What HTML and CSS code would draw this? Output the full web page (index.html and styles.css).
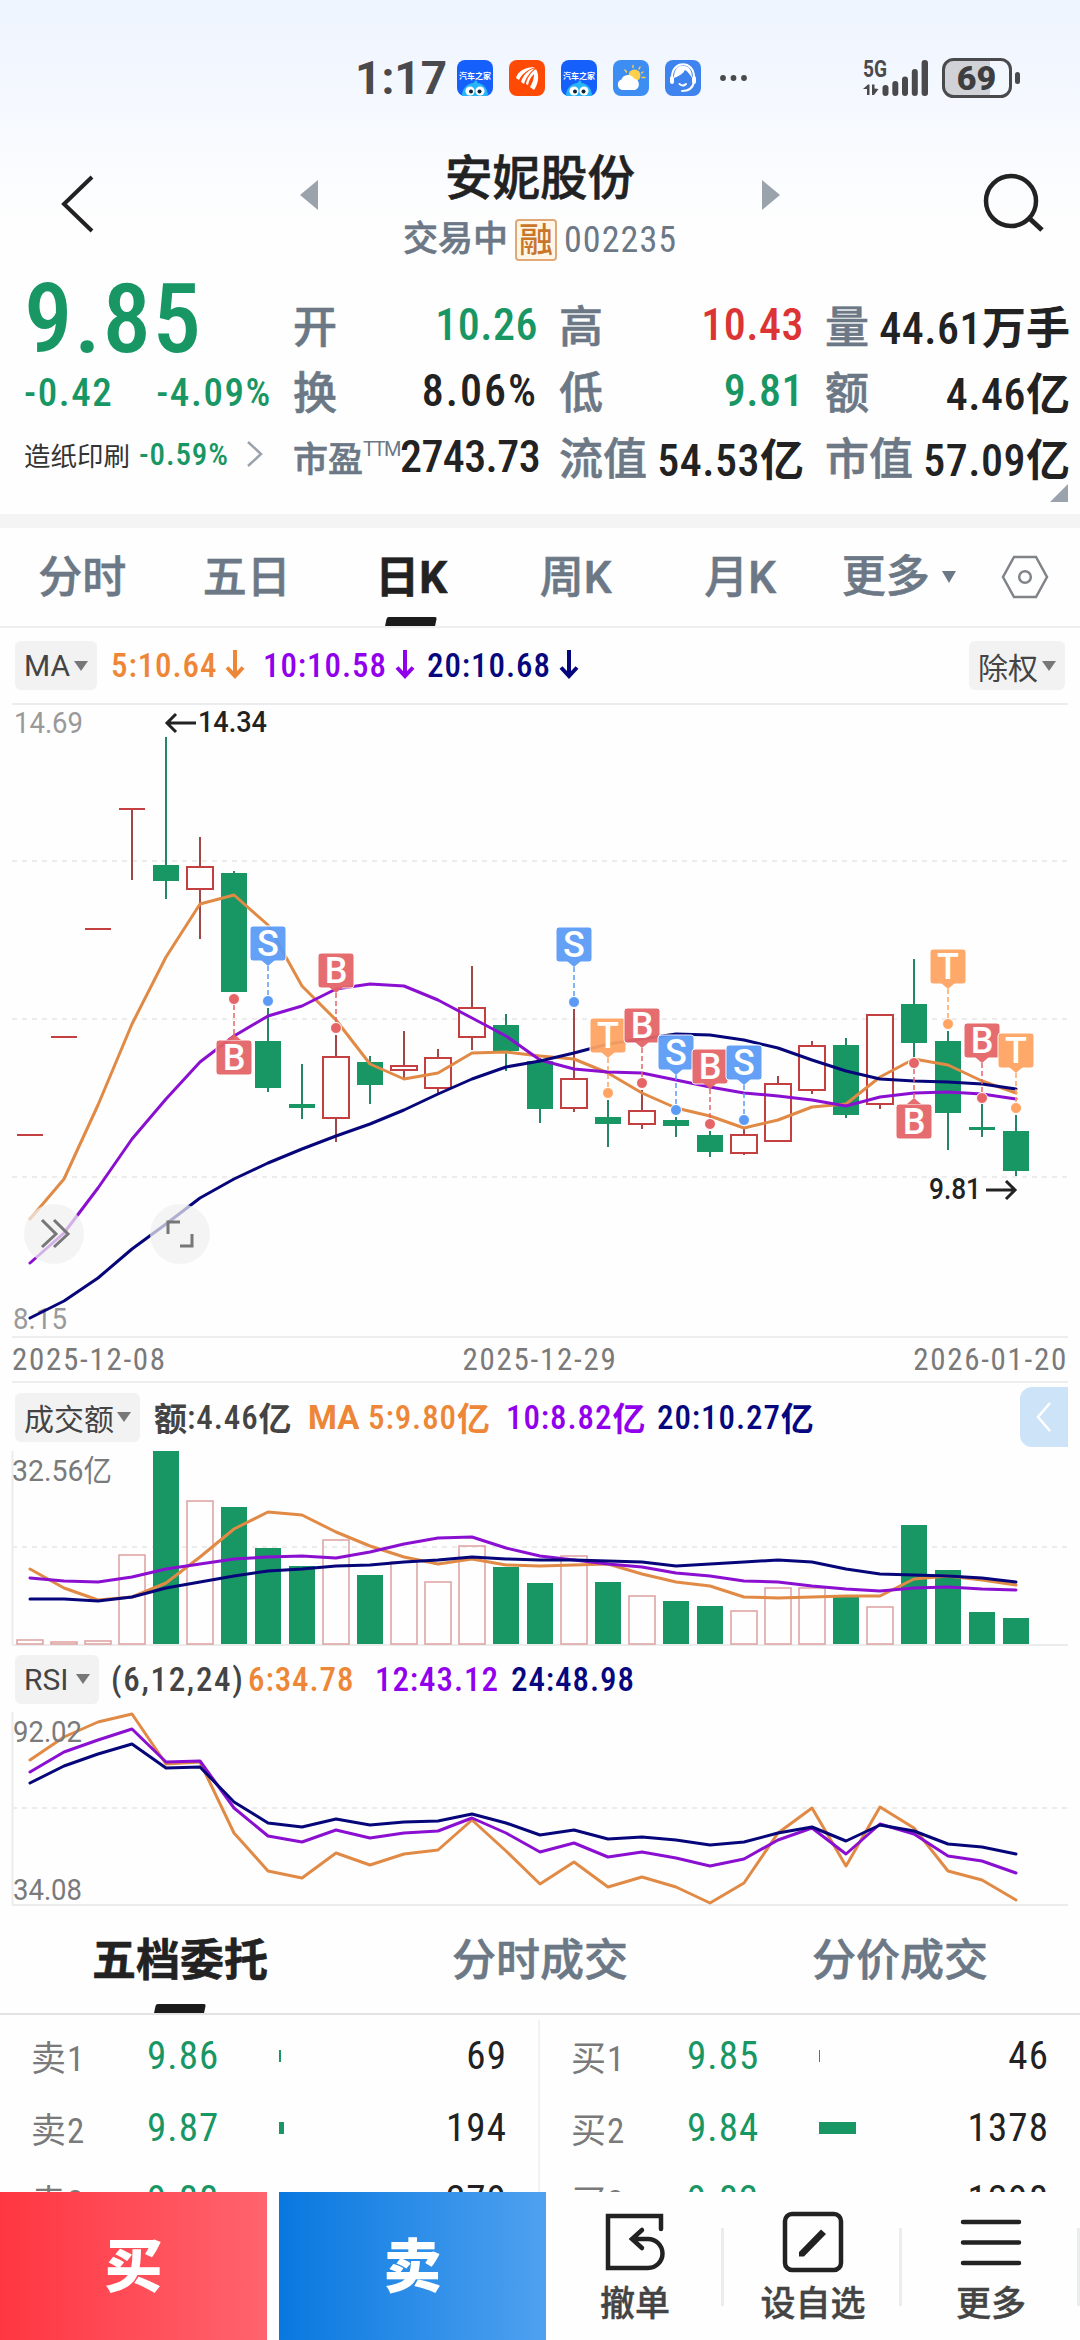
FILE: index.html
```html
<!DOCTYPE html>
<html lang="zh-CN">
<head>
    <meta charset="UTF-8">
    <meta name="viewport" content="width=device-width, initial-scale=1.0">
    <title>安妮股份 002235</title>
    <link rel="stylesheet" href="styles.css">
</head>
<body>
<header class="top">
    <div class="status-bar">
        <span class="clock">1:17</span>
        <div class="app-icons">
            <svg class="app-icon" viewBox="0 0 36 36">
                <rect width="36" height="36" rx="8" fill="#1560fb"/>
                <text x="18" y="18.5" class="app-name">汽车之家</text>
                <path d="M5 36C5 28 10 24 16 23L19 20L21 23C27 24 31 29 31 36Z" fill="#27b5f5"/>
                <circle cx="13" cy="31" r="4.6" fill="#fff"/><circle cx="23" cy="31" r="4.6" fill="#fff"/>
                <circle cx="14" cy="31.5" r="2" fill="#123"/><circle cx="22.5" cy="31.5" r="2" fill="#123"/>
            </svg>
            <svg class="app-icon" viewBox="0 0 36 36">
                <rect width="36" height="36" rx="8" fill="#ff4a05"/>
                <path d="M7 18C9 11 16 7 26 7C18 10 13 14 10 20ZM12 22C14 15 19 10 26 8C20 13 17 18 15 24ZM21 27C24 22 25 18 25 14C22 17 20 20 19 25L17 24C18 18 22 12 27 9C31 16 29 24 25 30Z" fill="#fff"/>
            </svg>
            <svg class="app-icon" viewBox="0 0 36 36">
                <rect width="36" height="36" rx="8" fill="#1560fb"/>
                <text x="18" y="18.5" class="app-name">汽车之家</text>
                <path d="M5 36C5 28 10 24 16 23L19 20L21 23C27 24 31 29 31 36Z" fill="#27b5f5"/>
                <circle cx="13" cy="31" r="4.6" fill="#fff"/><circle cx="23" cy="31" r="4.6" fill="#fff"/>
                <circle cx="14" cy="31.5" r="2" fill="#123"/><circle cx="22.5" cy="31.5" r="2" fill="#123"/>
            </svg>
            <svg class="app-icon" viewBox="0 0 36 36">
                <rect width="36" height="36" rx="8" fill="#3d8df2"/>
                <circle cx="21.5" cy="15.5" r="6" fill="#ffd04a"/>
                <path d="M12 10L13.5 12M20 5.5V7.5M27 7L26 9M30 12L28.5 13M29 17.5H32" stroke="#ffd04a" stroke-width="1.4" stroke-linecap="round"/>
                <path d="M9 30A5.5 5.5 0 0 1 8.5 19.5A7 7 0 0 1 21 18.5A6 6 0 0 1 22 30Z" fill="#fff"/>
            </svg>
            <svg class="app-icon" viewBox="0 0 36 36">
                <rect width="36" height="36" rx="8" fill="#3f83ee"/>
                <path d="M7 17C7 0 29 0 29 17" fill="none" stroke="#fff" stroke-width="2"/>
                <path d="M9 18C9 7 15 5 19 6C24 6 27 10 27 18C25 14 22 11 20 10C18 14 14 16 9 18Z" fill="#fff"/>
                <rect x="5" y="16" width="4" height="8" rx="2" fill="#fff"/><rect x="27" y="16" width="4" height="8" rx="2" fill="#fff"/>
                <path d="M14.5 24Q18 27 21 24M29 22C28 27 24 31 17 31" fill="none" stroke="#fff" stroke-width="2" stroke-linecap="round"/>
            </svg>
        </div>
        <svg class="more-dots" viewBox="0 0 28 6"><circle cx="3" cy="3" r="2.9"/><circle cx="13.5" cy="3" r="2.9"/><circle cx="24" cy="3" r="2.9"/></svg>
        <svg class="signal" viewBox="0 0 66 38">
            <text x="0" y="18" class="net" textLength="24" lengthAdjust="spacingAndGlyphs">5G</text>
            <path d="M0 30L5 25.5H6.5V36H4V30ZM9 25.5H11.5V29.5L15.5 30L11 36H9Z"/>
            <rect x="19.5" y="26" width="6" height="11" rx="3"/><rect x="29.3" y="22" width="6" height="15" rx="3"/>
            <rect x="39" y="17.5" width="6" height="19.5" rx="3"/><rect x="48.8" y="10" width="6" height="27" rx="3"/>
            <rect x="58.6" y="1" width="6.4" height="36" rx="3"/>
        </svg>
        <svg class="battery" viewBox="0 0 80 40">
            <path d="M12 2H48V38H12Q2 38 2 28V12Q2 2 12 2Z" fill="#d0d2d7"/>
            <rect x="1.5" y="1.5" width="67" height="37" rx="10" fill="none" stroke="#4a4a4c" stroke-width="3"/>
            <rect x="73" y="14" width="5" height="12" rx="2.5" fill="#4a4a4c"/>
            <text x="34.5" y="31.5" class="level">69</text>
        </svg>
    </div>
    <div class="title-bar">
        <svg class="back" viewBox="0 0 36 60"><path d="M32 3L4 30L32 57" fill="none" stroke="#222" stroke-width="4"/></svg>
        <svg class="prev" viewBox="0 0 18 30"><path d="M18 0V30L0 15Z"/></svg>
        <div class="title">
            <h1>安妮股份</h1>
            <p><span class="state">交易中</span><b class="badge">融</b><span class="code">002235</span></p>
        </div>
        <svg class="next" viewBox="0 0 18 30"><path d="M0 0V30L18 15Z"/></svg>
        <svg class="search" viewBox="0 0 62 60"><circle cx="28" cy="28" r="25" fill="none" stroke="#222" stroke-width="4.5"/><path d="M46 45L59 57" stroke="#222" stroke-width="5"/></svg>
    </div>
</header>

<section class="quote">
    <div class="price-box">
        <div class="price">9.85</div>
        <div class="change"><span>-0.42</span><span>-4.09%</span></div>
        <div class="sector">
            <span class="sector-name">造纸印刷</span><span class="sector-change">-0.59%</span>
            <svg class="arrow" viewBox="0 0 18 28"><path d="M2 2L15 14L2 26" fill="none" stroke="#9aa2ab" stroke-width="2.5"/></svg>
        </div>
    </div>
    <dl class="stats">
        <div><dt>开</dt><dd class="green">10.26</dd></div>
        <div><dt>高</dt><dd class="red">10.43</dd></div>
        <div><dt>量</dt><dd>44.61<b>万手</b></dd></div>
        <div><dt>换</dt><dd class="rate">8.06%</dd></div>
        <div><dt>低</dt><dd class="green">9.81</dd></div>
        <div><dt>额</dt><dd>4.46<b>亿</b></dd></div>
        <div><dt class="small">市盈<sup>TTM</sup></dt><dd class="ttm">2743.73</dd></div>
        <div><dt>流值</dt><dd>54.53<b>亿</b></dd></div>
        <div><dt>市值</dt><dd>57.09<b>亿</b></dd></div>
    </dl>
    <svg class="corner" viewBox="0 0 18 18"><path d="M18 0V18H0Z" fill="#9aa2ab"/></svg>
</section>

<nav class="period-tabs">
    <a>分时</a><a>五日</a><a class="active">日K</a><a>周K</a><a>月K</a><a class="with-caret">更多<i class="caret"></i></a>
    <svg class="hexagon" viewBox="0 0 48 44"><path d="M13 2H35L46 22L35 42H13L2 22Z" fill="none" stroke="#808488" stroke-width="2.5"/><circle cx="24" cy="22" r="5.8" fill="none" stroke="#808488" stroke-width="2.5"/></svg>
</nav>

<div class="indicator ma-row">
    <span class="tag">MA<i class="caret"></i></span>
    <span class="orange">5:10.64<svg class="down" viewBox="0 0 20 30"><path d="M10 1V27M2 18.5L10 27L18 18.5"/></svg></span>
    <span class="purple">10:10.58<svg class="down" viewBox="0 0 20 30"><path d="M10 1V27M2 18.5L10 27L18 18.5"/></svg></span>
    <span class="navy">20:10.68<svg class="down" viewBox="0 0 20 30"><path d="M10 1V27M2 18.5L10 27L18 18.5"/></svg></span>
    <span class="tag right">除权<i class="caret"></i></span>
</div>
<svg id="k-chart" class="chart" width="1080" height="633" viewBox="0 703 1080 633"></svg>
<div class="dates"><span>2025-12-08</span><span>2025-12-29</span><span>2026-01-20</span></div>

<div class="indicator vol-row">
    <span class="tag">成交额<i class="caret"></i></span>
    <span class="dark"><b>额</b>:4.46<b>亿</b></span>
    <span class="orange ma"><b>MA</b></span>
    <span class="orange">5:9.80<b>亿</b></span>
    <span class="purple">10:8.82<b>亿</b></span>
    <span class="navy">20:10.27<b>亿</b></span>
    <span class="drawer"><svg viewBox="0 0 18 32"><path d="M15 2L3 16L15 30" fill="none" stroke="#fff" stroke-width="2.5"/></svg></span>
</div>
<svg id="vol-chart" class="chart" width="1080" height="195" viewBox="0 1451 1080 195"></svg>

<div class="indicator rsi-row">
    <span class="tag">RSI<i class="caret"></i></span>
    <span class="dark">(6,12,24)</span>
    <span class="orange">6:34.78</span>
    <span class="purple">12:43.12</span>
    <span class="navy">24:48.98</span>
</div>
<svg id="rsi-chart" class="chart" width="1080" height="194" viewBox="0 1712 1080 194"></svg>

<nav class="deal-tabs"><a class="active">五档委托</a><a>分时成交</a><a>分价成交</a></nav>

<main class="depth">
    <div class="side">
        <div class="row"><span>卖1</span><em>9.86</em><i style="width:2px"></i><strong>69</strong></div>
        <div class="row"><span>卖2</span><em>9.87</em><i style="width:5px"></i><strong>194</strong></div>
        <div class="row"><span>卖3</span><em>9.88</em><i style="width:8px"></i><strong>279</strong></div>
    </div>
    <div class="side">
        <div class="row"><span>买1</span><em>9.85</em><i style="width:1px"></i><strong>46</strong></div>
        <div class="row"><span>买2</span><em>9.84</em><i style="width:37px"></i><strong>1378</strong></div>
        <div class="row"><span>买3</span><em>9.83</em><i style="width:35px"></i><strong>1298</strong></div>
    </div>
</main>

<footer class="actions">
    <a class="buy">买</a>
    <a class="sell">卖</a>
    <a class="tool">
        <svg viewBox="0 0 62 62"><path d="M57 18V5H4V57H44A14 14 0 0 0 44 28H28M38 19L28 28L38 37" fill="none" stroke="#222" stroke-width="4.5" stroke-linecap="round"/></svg>
        撤单
    </a>
    <a class="tool">
        <svg viewBox="0 0 62 62"><rect x="3" y="3" width="56" height="56" rx="7" fill="none" stroke="#222" stroke-width="4.5"/><path d="M17 41L39 18.5L44 23L22 45.5H17Z" fill="#222"/></svg>
        设自选
    </a>
    <a class="tool">
        <svg viewBox="0 0 62 62"><path d="M3 11H59M3 31.5H59M3 52H59" stroke="#222" stroke-width="4.5" stroke-linecap="round"/></svg>
        更多
    </a>
</footer>
<script src="charts.js"></script>
</body>
</html>
```
FILE: styles.css
```css
:root {
    --green: #189664;
    --red: #dc3434;
    --slate: #6c7885;
    --dark: #222;
    --orange: #ed8636;
    --purple: #9100ec;
    --navy: #06067f;
    --line: #eee;
}

* {
    box-sizing: border-box;
}

body {
    display: flex;
    flex-direction: column;
    width: 1080px;
    height: 2340px;
    margin: 0;
    overflow: hidden;
    background: #fefefe;
    color: var(--dark);
    font-family: Roboto, "Noto Sans CJK SC", sans-serif;
    font-stretch: 75%;
}

svg {
    display: block;
    flex-shrink: 0;
    overflow: visible;
}

h1, p, dl, dd {
    margin: 0;
}

i, em {
    font-style: normal;
}

.green { color: var(--green); }
.red { color: var(--red); }
.orange { color: var(--orange); }
.purple { color: var(--purple); }
.navy { color: var(--navy); }
.dark { color: #444; }

/* thicken the regular chinese glyphs a little */
h1, .state, dt, .period-tabs a, .deal-tabs a {
    -webkit-text-stroke: 0.6px currentColor;
}

/* header */
.top {
    height: 265px;
    flex-shrink: 0;
    background: linear-gradient(#eef4fe, #f6f9ff 45%, #fefefe 85%);
}

.status-bar {
    display: flex;
    align-items: center;
    height: 156px;
    padding-left: 355px;
}

.clock {
    width: 102px;
    color: #4a4a4c;
    font: 700 46px Roboto, sans-serif;
}

.app-icons {
    display: flex;
    gap: 16px;
}

.app-icon {
    width: 36px;
    height: 36px;
}

.app-name {
    fill: #fff;
    font: 700 8px "Noto Sans CJK SC", sans-serif;
    text-anchor: middle;
}

.more-dots {
    width: 28px;
    margin-left: 19px;
    fill: #4a4a4c;
}

.signal {
    width: 66px;
    height: 38px;
    margin-left: 115px;
    fill: #4a4a4c;
}

.net {
    font: 700 24px Roboto, sans-serif;
}

.battery {
    width: 80px;
    height: 40px;
    margin-left: 13px;
}

.level {
    fill: #3e3e40;
    font: 900 34px Roboto, sans-serif;
    text-anchor: middle;
}

.title-bar {
    display: flex;
    align-items: flex-start;
    height: 109px;
}

.back {
    width: 36px;
    height: 60px;
    margin: 18px 0 0 60px;
}

.prev, .next {
    width: 18px;
    height: 30px;
    margin-top: 24px;
    fill: #9aa2ab;
}

.prev {
    margin-left: 204px;
}

.title {
    width: 444px;
    text-align: center;
}

.title h1 {
    font-size: 47.5px;
    font-weight: 500;
    line-height: 50px;
    margin-top: -2px;
}

.title p {
    display: flex;
    justify-content: center;
    align-items: center;
    margin-top: 14px;
    color: var(--slate);
    font-size: 35px;
    font-weight: 500;
    line-height: 44px;
}

.badge {
    margin: 0 7px;
    padding: 0 2px;
    border: 2px solid #e0a878;
    border-radius: 4px;
    background: #fff6e8;
    color: #c9762b;
    font-size: 34px;
    font-weight: 500;
    line-height: 38px;
}

.code {
    font-size: 36px;
    font-weight: 400;
    letter-spacing: 1.1px;
}

.search {
    width: 62px;
    height: 60px;
    margin: 17px 0 0 203px;
}

/* quote */
.quote {
    display: flex;
    position: relative;
    flex-shrink: 0;
    height: 263px;
    border-bottom: 14px solid #f4f4f4;
}

.price-box {
    width: 293px;
    padding-left: 24px;
    color: var(--green);
}

.price {
    height: 95px;
    font-size: 97px;
    font-weight: 500;
    line-height: 109px;
    letter-spacing: 1.5px;
}

.change {
    display: flex;
    justify-content: space-between;
    width: 248px;
    font-size: 39px;
    font-weight: 500;
    line-height: 66px;
    letter-spacing: 1.6px;
}

.sector {
    display: flex;
    align-items: center;
    height: 56px;
}

.sector-name {
    width: 115px;
    color: #333;
    font-size: 26.5px;
}

.sector-change {
    width: 107px;
    font-size: 31px;
    font-weight: 500;
    letter-spacing: 0.9px;
}

.arrow {
    width: 18px;
    height: 28px;
}

.stats {
    display: grid;
    grid-template-columns: repeat(3, 245px);
    grid-auto-rows: 66px;
    column-gap: 21px;
    padding-top: 27px;
}

.stats div {
    display: flex;
    justify-content: space-between;
    align-items: center;
    white-space: nowrap;
}

.stats dt {
    margin-top: -2px;
    color: var(--slate);
    font-size: 44px;
    font-weight: 500;
}

.stats .small {
    display: flex;
    font-size: 35px;
}

.stats sup {
    font-size: 20px;
    line-height: 36px;
    font-weight: 400;
    font-stretch: 100%;
    letter-spacing: -1.5px;
    -webkit-text-stroke: 0;
}

.stats dd {
    font-size: 44px;
    font-weight: 500;
    letter-spacing: 0.5px;
}

.stats .rate {
    letter-spacing: 2px;
}

.stats .ttm {
    letter-spacing: -0.6px;
}

.stats b {
    letter-spacing: 0;
}

.corner {
    position: absolute;
    right: 12px;
    bottom: 12px;
    width: 18px;
    height: 18px;
}

/* tabs */
.period-tabs {
    display: flex;
    align-items: center;
    flex-shrink: 0;
    height: 100px;
    border-bottom: 2px solid var(--line);
    color: var(--slate);
    font-size: 44px;
    font-weight: 500;
    font-stretch: 100%;
}

.period-tabs a {
    width: 164.5px;
    height: 98px;
    line-height: 101px;
    text-align: center;
}

.period-tabs .with-caret {
    display: flex;
    align-items: center;
    justify-content: center;
    padding-right: 12px;
}

.active {
    position: relative;
    color: var(--dark);
    font-weight: 700;
}

.active::after {
    content: "";
    position: absolute;
    left: 50%;
    bottom: 0;
    width: 50px;
    height: 9px;
    margin-left: -25px;
    border-radius: 2px 2px 0 0;
    background: #1b1b1b;
    transform: skewX(-12deg);
}

.caret {
    display: inline-block;
    margin-left: 12px;
    border: 7px solid transparent;
    border-top: 12px solid currentColor;
    border-bottom: 0;
}

.hexagon {
    width: 48px;
    height: 44px;
    margin-left: 14px;
}

/* indicator rows */
.indicator {
    display: flex;
    align-items: center;
    flex-shrink: 0;
    padding-left: 15px;
    font-size: 33px;
    font-weight: 500;
    letter-spacing: 0.9px;
    white-space: nowrap;
}

.indicator > span {
    display: flex;
    align-items: center;
    flex-shrink: 0;
}

.indicator b {
    letter-spacing: 0;
}

.ma-row { height: 75px; }
.vol-row { height: 68px; }
.rsi-row { height: 66px; }

.indicator .tag {
    height: 49px;
    margin-right: 14px;
    padding: 0 9px;
    border-radius: 6px;
    background: #f2f2f2;
    color: #444;
    font-size: 30px;
    font-weight: 400;
    font-stretch: 100%;
    letter-spacing: 0;
}

.ma-row .tag {
    width: 82px;
}

.rsi-row .tag {
    width: 84px;
    margin-right: 12px;
}

.tag .caret {
    margin-left: auto;
    border-width: 10px 7px 0;
    border-top-color: #777;
}

.ma-row .orange { width: 152px; }
.ma-row .purple { width: 164px; }

.ma-row .tag.right {
    width: 96px;
    margin: 0 15px 0 auto;
}

.down {
    width: 20px;
    height: 30px;
    margin: 0 0 4px 8px;
    fill: none;
    stroke: currentColor;
    stroke-width: 4;
}

.vol-row .tag { width: 125px; }
.vol-row .dark { width: 154px; }
.vol-row .orange { width: 138px; }
.vol-row .ma { width: 60px; font-stretch: 100%; }
.vol-row .purple { width: 151px; }

.indicator .drawer {
    justify-content: center;
    width: 48px;
    height: 60px;
    margin: 0 12px 0 auto;
    border-radius: 12px 0 0 12px;
    background: #cde3f8;
}

.drawer svg {
    width: 18px;
    height: 32px;
}

.rsi-row .dark { width: 137px; letter-spacing: 1.7px; }
.rsi-row .orange { width: 127px; }
.rsi-row .purple { width: 136px; }

.dates {
    display: flex;
    justify-content: space-between;
    align-items: center;
    flex-shrink: 0;
    height: 47px;
    margin: 0 12px;
    border-top: 2px solid var(--line);
    border-bottom: 2px solid var(--line);
    color: #7a7a7a;
    font-size: 31px;
    letter-spacing: 1.7px;
}

/* charts */
.chart {
    overflow: hidden;
}

.grid-solid { stroke: #ececec; stroke-width: 2; }
.grid-dash { stroke: #ececec; stroke-width: 2; stroke-dasharray: 5 5; }

.wick { stroke-width: 2; }
.up { fill: #fefefe; stroke: #c43f3f; stroke-width: 2; }
.fall { fill: var(--green); stroke: none; }
.up-wick { stroke: #a04848; }
.fall-wick { stroke: #268562; }
.vol-up { fill: none; stroke: #dda0a0; stroke-width: 1.5; }

.curve {
    fill: none;
    stroke-width: 3;
    stroke-linejoin: round;
    stroke-linecap: round;
}

.axis { fill: #999; font: 400 30px Roboto, "Noto Sans CJK SC", sans-serif; }
.axis-dark { fill: #7a7a7a; font: 400 30px Roboto, "Noto Sans CJK SC", sans-serif; }
.peak { fill: #222; font: 500 30px Roboto, sans-serif; }
.letter { fill: #fff; font: 500 36px Roboto, sans-serif; text-anchor: middle; }

/* depth */
.deal-tabs {
    display: flex;
    flex-shrink: 0;
    height: 109px;
    border-bottom: 2px solid #e2e2e2;
    color: var(--slate);
    font-size: 44px;
    font-weight: 500;
}

.deal-tabs a {
    width: 360px;
    height: 107px;
    line-height: 111px;
    text-align: center;
}

.depth {
    display: flex;
    flex-shrink: 0;
    height: 177px;
    padding-top: 5px;
    overflow: hidden;
}

.side {
    width: 541px;
}

.side:first-child {
    border-right: 2px solid #f2f2f2;
}

.row {
    display: flex;
    align-items: center;
    height: 72px;
    padding: 0 31px;
    font-size: 39px;
    font-weight: 400;
    letter-spacing: 1.1px;
}

.row span {
    width: 116px;
    margin-top: -2px;
    color: #7a7a7a;
    font-size: 35px;
}

.row em {
    width: 132px;
    color: var(--green);
}

.row i {
    height: 12px;
    background: var(--green);
}

.row strong {
    margin-left: auto;
    font-weight: 400;
}

/* bottom bar */
.actions {
    display: flex;
    flex-shrink: 0;
    height: 148px;
    background: #fefefe;
}

.buy, .sell {
    width: 267px;
    margin-right: 12px;
    color: #fff;
    font-size: 58px;
    font-weight: 900;
    line-height: 150px;
    text-align: center;
    background: linear-gradient(90deg, #ff3641, #ff646e);
}

.sell {
    margin-right: 0;
    background: linear-gradient(90deg, #0878df, #4fa1f0);
}

.tool {
    display: flex;
    position: relative;
    flex-direction: column;
    align-items: center;
    width: 178px;
    padding-top: 19px;
    color: #444;
    font-size: 35px;
    font-weight: 500;
    line-height: 64px;
    -webkit-text-stroke: 0.4px currentColor;
}

.tool svg {
    width: 62px;
    height: 62px;
}

.tool::after {
    content: "";
    position: absolute;
    right: 0;
    top: 36px;
    width: 3px;
    height: 78px;
    background: #ebeded;
}
```
FILE: charts.js
```js
const STEP = 34;
const FIRST = 30;
const COLORS = { orange: '#e08a45', purple: '#8a0fd0', navy: '#06067a' };
const MARKS = { S: '#5b9bf5', B: '#e56567', T: '#ffa462' };

const px = i => FIRST + STEP * i;

function line(x1, y1, x2, y2, cls) {
    return `<line x1="${x1}" y1="${y1}" x2="${x2}" y2="${y2}" class="${cls}"/>`;
}

function curve(values, color) {
    const points = values.map((y, i) => px(i) + ',' + y).join(' ');
    return `<polyline points="${points}" class="curve" stroke="${COLORS[color]}"/>`;
}

function label(x, y, text, width, cls) {
    return `<text x="${x}" y="${y}" class="${cls}" textLength="${width}" lengthAdjust="spacingAndGlyphs">${text}</text>`;
}

// [up?, high, top, bottom, low]
const candles = [
    [1, 1135, 1135, 1135, 1135], [1, 1037, 1037, 1037, 1037], [1, 929, 929, 929, 929], [1, 809, 809, 809, 880],
    [0, 737, 865, 881, 899], [1, 837, 867, 889, 939], [0, 871, 873, 992, 992], [0, 1008, 1041, 1088, 1092],
    [0, 1064, 1104, 1108, 1119], [1, 1035, 1057, 1118, 1142], [0, 1056, 1062, 1085, 1104], [1, 1031, 1066, 1070, 1079],
    [1, 1049, 1058, 1088, 1093], [1, 966, 1008, 1037, 1050], [0, 1014, 1025, 1051, 1071], [0, 1058, 1061, 1109, 1123],
    [1, 1009, 1079, 1108, 1112], [0, 1100, 1117, 1124, 1147], [1, 1090, 1111, 1124, 1129], [0, 1117, 1120, 1126, 1137],
    [0, 1131, 1135, 1152, 1157], [1, 1129, 1135, 1153, 1155], [1, 1076, 1084, 1141, 1141], [1, 1041, 1046, 1090, 1094],
    [0, 1038, 1045, 1115, 1118], [1, 1015, 1015, 1104, 1109], [0, 959, 1004, 1043, 1058], [0, 1031, 1041, 1113, 1150],
    [0, 1103, 1127, 1130, 1137], [0, 1115, 1131, 1171, 1176]
];

const ma5 = [1219, 1179, 1105, 1024, 957, 904, 895, 925, 986, 1020, 1064, 1079, 1073, 1053, 1052, 1056, 1059, 1073, 1093, 1108, 1116, 1128, 1120, 1107, 1104, 1077, 1059, 1065, 1081, 1093];
const ma10 = [1263, 1233, 1188, 1139, 1099, 1062, 1036, 1016, 1006, 989, 984, 986, 1000, 1018, 1036, 1060, 1069, 1072, 1073, 1080, 1087, 1093, 1096, 1100, 1106, 1097, 1093, 1092, 1094, 1099];
const ma20 = [1318, 1301, 1278, 1249, 1224, 1198, 1179, 1163, 1149, 1136, 1124, 1110, 1094, 1079, 1067, 1061, 1053, 1044, 1039, 1034, 1035, 1040, 1048, 1060, 1071, 1079, 1081, 1082, 1084, 1089];

// [index, letter, box top, dot y]
const marks = [
    [6, 'B', 1040, 999], [7, 'S', 926, 1001], [9, 'B', 953, 1028], [16, 'S', 927, 1002], [17, 'T', 1018, 1093],
    [18, 'B', 1008, 1083], [19, 'S', 1035, 1110], [20, 'B', 1049, 1124], [21, 'S', 1045, 1120], [26, 'B', 1104, 1063],
    [27, 'T', 949, 1024], [28, 'B', 1023, 1098], [29, 'T', 1033, 1108]
];

function drawCandle([up, high, top, bottom, low], i) {
    const x = px(i);
    let out = line(x, high, x, low, 'wick ' + (up ? 'up-wick' : 'fall-wick'));
    if (up && top === bottom) {
        out += line(x - 13, top, x + 13, top, 'up');
    } else {
        out += `<rect x="${x - 13}" y="${top}" width="26" height="${bottom - top}" class="${up ? 'up' : 'fall'}"/>`;
    }
    return out;
}

function drawMark([i, letter, top, dot]) {
    const x = px(i);
    const color = MARKS[letter];
    const below = dot < top;
    const edge = below ? top : top + 34;
    const tip = below ? edge - 6 : edge + 6;
    return `<line x1="${x}" y1="${tip}" x2="${x}" y2="${dot}" stroke="${color}" stroke-width="1.5" stroke-dasharray="5 3"/>
        <circle cx="${x}" cy="${dot}" r="5.5" fill="${color}" stroke="#fff" stroke-width="1"/>
        <g opacity="0.94"><rect x="${x - 18}" y="${top}" width="36" height="35" rx="3" fill="${color}" stroke="#fff" stroke-width="1"/>
        <path d="M${x - 7} ${edge}L${x} ${tip}L${x + 7} ${edge}Z" fill="${color}"/></g>
        <text x="${x}" y="${top + 30}" class="letter">${letter}</text>`;
}

document.getElementById('k-chart').innerHTML =
    line(12, 704, 1068, 704, 'grid-solid') +
    [861, 1019, 1177].map(y => line(12, y, 1068, y, 'grid-dash')).join('') +
    label(14, 733, '14.69', 69, 'axis') +
    label(13, 1329, '8.15', 54, 'axis') +
    candles.map(drawCandle).join('') +
    curve(ma5, 'orange') + curve(ma10, 'purple') + curve(ma20, 'navy') +
    marks.map(drawMark).join('') +
    '<path d="M176 714L167 723L176 732M167 723H196" fill="none" stroke="#222" stroke-width="3"/>' +
    label(198, 732, '14.34', 69, 'peak') +
    label(929, 1199, '9.81', 52, 'peak') +
    '<path d="M1006 1181L1015 1190L1006 1199M1015 1190H986" fill="none" stroke="#222" stroke-width="3"/>' +
    '<circle cx="54" cy="1234" r="30" fill="#f0f0f0" opacity="0.72"/><path d="M42 1220L56 1234L42 1247M54 1220L68 1234L54 1247" fill="none" stroke="#777" stroke-width="3"/>' +
    '<circle cx="180" cy="1234" r="30" fill="#f0f0f0" opacity="0.72"/><path d="M168 1234V1222H180M192 1234V1246H180" fill="none" stroke="#777" stroke-width="3"/>';

const volumes = [1640, 1642, 1641, 1555, 1451, 1501, 1507, 1548, 1566, 1540, 1575, 1562, 1582, 1546, 1567, 1583, 1556, 1582, 1596, 1601, 1606, 1611, 1588, 1588, 1596, 1607, 1525, 1570, 1612, 1618];
const vol5 = [1569, 1588, 1600, 1597, 1583, 1557, 1529, 1512, 1515, 1532, 1546, 1557, 1564, 1559, 1565, 1566, 1565, 1564, 1574, 1582, 1586, 1597, 1598, 1597, 1596, 1596, 1579, 1576, 1580, 1585];
const vol10 = [1578, 1581, 1582, 1577, 1569, 1564, 1559, 1557, 1556, 1558, 1552, 1544, 1538, 1537, 1548, 1556, 1560, 1564, 1567, 1573, 1576, 1581, 1582, 1586, 1589, 1591, 1588, 1587, 1589, 1590];
const vol20 = [1599, 1599, 1601, 1597, 1588, 1582, 1576, 1571, 1569, 1566, 1565, 1562, 1560, 1557, 1559, 1560, 1560, 1561, 1562, 1566, 1564, 1562, 1560, 1562, 1569, 1574, 1575, 1576, 1578, 1582];

document.getElementById('vol-chart').innerHTML =
    line(12.5, 1451, 12.5, 1645, 'grid-solid') +
    line(12, 1547, 1068, 1547, 'grid-dash') +
    line(12, 1645, 1068, 1645, 'grid-solid') +
    label(12, 1481, '32.56亿', 100, 'axis-dark') +
    volumes.map((y, i) => `<rect x="${px(i) - 13}" y="${y}" width="26" height="${1644 - y}" class="${candles[i][0] ? 'vol-up' : 'fall'}"/>`).join('') +
    curve(vol5, 'orange') + curve(vol10, 'purple') + curve(vol20, 'navy');

const rsi6 = [1760, 1737, 1722, 1714, 1764, 1762, 1833, 1871, 1878, 1853, 1865, 1854, 1850, 1820, 1851, 1884, 1862, 1887, 1877, 1887, 1903, 1883, 1833, 1808, 1866, 1807, 1828, 1871, 1880, 1900];
const rsi12 = [1772, 1752, 1740, 1729, 1762, 1761, 1808, 1836, 1842, 1830, 1838, 1833, 1831, 1818, 1833, 1852, 1843, 1857, 1852, 1858, 1866, 1859, 1840, 1828, 1854, 1824, 1834, 1856, 1861, 1873];
const rsi24 = [1783, 1766, 1754, 1744, 1768, 1767, 1802, 1823, 1827, 1819, 1825, 1822, 1821, 1814, 1823, 1835, 1830, 1839, 1837, 1840, 1845, 1842, 1833, 1827, 1841, 1825, 1831, 1844, 1847, 1854];

document.getElementById('rsi-chart').innerHTML =
    line(12.5, 1712, 12.5, 1905, 'grid-solid') +
    line(12, 1808, 1068, 1808, 'grid-dash') +
    line(12, 1905, 1068, 1905, 'grid-solid') +
    curve(rsi6, 'orange') + curve(rsi12, 'purple') + curve(rsi24, 'navy') +
    label(13, 1742, '92.02', 69, 'axis-dark') +
    label(13, 1900, '34.08', 69, 'axis-dark');
```
